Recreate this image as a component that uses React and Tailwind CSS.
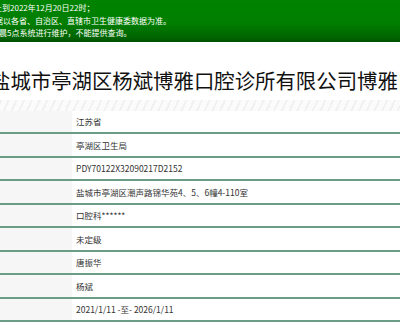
const rows = [
  "江苏省",
  "亭湖区卫生局",
  "PDY70122X32090217D2152",
  "盐城市亭湖区潮声路锦华苑4、5、6幢4-110室",
  "口腔科******",
  "未定级",
  "唐振华",
  "杨斌",
  "2021/1/11 -至- 2026/1/11",
];

export default function App() {
  return (
    <div
      className="w-[400px] h-[323px] overflow-hidden bg-white"
      style={{ fontFamily: '"Noto Sans CJK SC", "Microsoft YaHei", sans-serif' }}
    >
      <div className="h-[42px] pt-[2px] bg-[linear-gradient(to_bottom,#008300_0%,#007e00_55%,#006400_90%,#004f00_100%)] text-white text-[8px] leading-[12.5px] whitespace-nowrap">
        <p className="ml-[-14px]">截止到2022年12月20日22时；</p>
        <p className="ml-[-13px]">数据以各省、自治区、直辖市卫生健康委数据为准。</p>
        <p className="ml-[-9px]">凌晨5点系统进行维护，不能提供查询。</p>
      </div>

      <h1 className="pt-[23px] pb-[5px] ml-[-10px] text-[20.4px] leading-[30px] text-[#111] whitespace-nowrap">
        盐城市亭湖区杨斌博雅口腔诊所有限公司博雅口腔诊所
      </h1>

      <div className="h-[10.5px] bg-[repeating-linear-gradient(115deg,#f1f1f1_0px,#f1f1f1_2px,#fbfbfb_2px,#fbfbfb_7px)]" />

      <div className="flex flex-col">
        {rows.map((value, i) => (
          <div
            key={i}
            className="grid grid-cols-[72px_1fr] h-[23.5px] border-b-2 border-[#6a9c86]"
          >
            <div className="bg-[#f5f6f5]" />
            <div className="bg-white pl-[4px] pt-[1px] flex items-center text-[8.5px] text-[#333] whitespace-nowrap">
              {value}
            </div>
          </div>
        ))}
      </div>
    </div>
  );
}
